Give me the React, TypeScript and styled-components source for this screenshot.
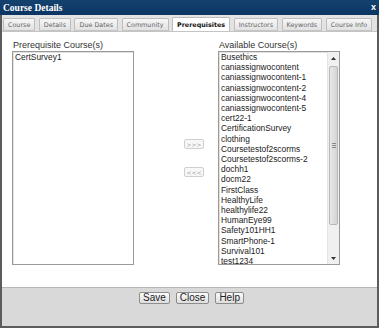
import React from "react";
import styled, { createGlobalStyle } from "styled-components";

const GlobalStyle = createGlobalStyle`
  html, body {
    margin: 0;
    padding: 0;
    width: 379px;
    height: 328px;
    overflow: hidden;
    background: #ffffff;
  }
`;

const tabs = [
  "Course",
  "Details",
  "Due Dates",
  "Community",
  "Prerequisites",
  "Instructors",
  "Keywords",
  "Course Info",
];

const available = [
  "Busethics",
  "caniassignwocontent",
  "caniassignwocontent-1",
  "caniassignwocontent-2",
  "caniassignwocontent-4",
  "caniassignwocontent-5",
  "cert22-1",
  "CertificationSurvey",
  "clothing",
  "Coursetestof2scorms",
  "Coursetestof2scorms-2",
  "dochh1",
  "docm22",
  "FirstClass",
  "HealthyLife",
  "healthylife22",
  "HumanEye99",
  "Safety101HH1",
  "SmartPhone-1",
  "Survival101",
  "test1234",
];

const App = () => {
  return (
    <>
      <GlobalStyle />
      <Window>
        <TitleBar>
          <Title>Course Details</Title>
          <CloseX>x</CloseX>
        </TitleBar>
        <TabStrip>
          {tabs.map((t) => (
            <Tab key={t} active={t === "Prerequisites"}>
              {t}
            </Tab>
          ))}
        </TabStrip>
        <Content>
          <Column>
            <Label>Prerequisite Course(s)</Label>
            <ListBox>
              <Item>CertSurvey1</Item>
            </ListBox>
          </Column>
          <Mover>
            <MoveButton>&gt;&gt;&gt;</MoveButton>
            <MoveButton>&lt;&lt;&lt;</MoveButton>
          </Mover>
          <Column>
            <Label>Available Course(s)</Label>
            <ListBox>
              <Items>
                {available.map((c) => (
                  <Item key={c}>{c}</Item>
                ))}
              </Items>
              <ScrollBar>
                <Arrow>
                  <svg width="5" height="3" viewBox="0 0 5 3">
                    <path d="M0 3 L2.5 0 L5 3 Z" fill="#333" />
                  </svg>
                </Arrow>
                <Track>
                  <Thumb>
                    <Grip />
                    <Grip />
                    <Grip />
                  </Thumb>
                </Track>
                <Arrow>
                  <svg width="5" height="3" viewBox="0 0 5 3">
                    <path d="M0 0 L2.5 3 L5 0 Z" fill="#333" />
                  </svg>
                </Arrow>
              </ScrollBar>
            </ListBox>
          </Column>
        </Content>
        <Footer>
          <FooterButton>Save</FooterButton>
          <FooterButton>Close</FooterButton>
          <FooterButton>Help</FooterButton>
        </Footer>
      </Window>
    </>
  );
};

const Window = styled.div`
  box-sizing: border-box;
  width: 379px;
  height: 328px;
  border: 2px solid #5c5c5c;
  border-top: none;
  display: flex;
  flex-direction: column;
  font-family: "Liberation Sans", Arial, sans-serif;
`;

const TitleBar = styled.div`
  height: 15px;
  flex: none;
  background: linear-gradient(#14426f, #0b3562);
  display: flex;
  align-items: center;
  justify-content: space-between;
  padding: 0 3px 0 3px;
  margin: 0 -2px;
`;

const Title = styled.span`
  color: #ffffff;
  font-family: "Liberation Serif", "Times New Roman", serif;
  font-weight: bold;
  font-size: 9.5px;
`;

const CloseX = styled.span`
  color: #ffffff;
  font-weight: bold;
  font-size: 9px;
  line-height: 9px;
`;

const TabStrip = styled.div`
  height: 16px;
  flex: none;
  background: #e3e3e3;
  display: flex;
  align-items: flex-end;
  gap: 3.5px;
  padding-left: 1px;
  border-bottom: 1px solid #c4c4c4;
  overflow: hidden;
`;

const Tab = styled.div<{ active?: boolean }>`
  box-sizing: border-box;
  flex: none;
  white-space: nowrap;
  height: ${(p) => (p.active ? "15px" : "13px")};
  padding: 0 4px;
  display: flex;
  align-items: center;
  font-family: "DejaVu Sans", Verdana, sans-serif;
  font-size: 6.4px;
  font-weight: ${(p) => (p.active ? "bold" : "normal")};
  color: ${(p) => (p.active ? "#111" : "#666")};
  background: ${(p) =>
    p.active ? "#ffffff" : "linear-gradient(#f6f6f6, #e2e2e2)"};
  border: 1px solid #bdbdbd;
  border-bottom: ${(p) => (p.active ? "none" : "1px solid #c4c4c4")};
  margin-bottom: ${(p) => (p.active ? "-1px" : "0")};
  border-radius: 2px 2px 0 0;
`;

const Content = styled.div`
  flex: 1;
  background: #ffffff;
  display: flex;
  padding: 8px 0 0 10px;
`;

const Column = styled.div`
  display: flex;
  flex-direction: column;
`;

const Label = styled.div`
  font-size: 9px;
  line-height: 11px;
  color: #333;
  padding-left: 1px;
`;

const ListBox = styled.div`
  box-sizing: border-box;
  width: 122px;
  height: 214px;
  border: 1px solid #9a9a9a;
  box-shadow: inset 1px 1px 0 #e0e0e0;
  background: #fff;
  display: flex;
  overflow: hidden;
`;

const Items = styled.div`
  flex: 1;
  overflow: hidden;
`;

const Item = styled.div`
  font-size: 8.4px;
  line-height: 10.2px;
  color: #222;
  padding-left: 2px;
  white-space: nowrap;
`;

const ScrollBar = styled.div`
  width: 11px;
  flex: none;
  display: flex;
  flex-direction: column;
  background: #f0f0f0;
  border-left: 1px solid #e4e4e4;
`;

const Arrow = styled.div`
  height: 12px;
  flex: none;
  display: flex;
  align-items: center;
  justify-content: center;
  background: #f0f0f0;
`;

const Track = styled.div`
  flex: 1;
  padding: 2px 1px 27px;
  display: flex;
`;

const Thumb = styled.div`
  flex: 1;
  box-sizing: border-box;
  border: 1px solid #b8b8b8;
  border-radius: 2px;
  background: linear-gradient(90deg, #e8e8e8, #d4d4d4);
  display: flex;
  flex-direction: column;
  justify-content: center;
  align-items: center;
  gap: 1px;
`;

const Grip = styled.div`
  width: 4px;
  height: 1px;
  background: #8a8a8a;
`;

const Mover = styled.div`
  width: 84px;
  height: 214px;
  margin-top: 11px;
  box-sizing: border-box;
  padding-left: 50px;
  display: flex;
  flex-direction: column;
  justify-content: center;
  gap: 18px;
`;

const MoveButton = styled.div`
  box-sizing: border-box;
  width: 20px;
  height: 10px;
  border: 1px solid #cfcfcf;
  border-radius: 2px;
  background: #f7f7f7;
  color: #9a9a9a;
  font-family: "DejaVu Sans", Verdana, sans-serif;
  font-size: 6px;
  display: flex;
  align-items: center;
  justify-content: center;
`;

const Footer = styled.div`
  height: 39px;
  flex: none;
  box-sizing: border-box;
  background: #d9d9d9;
  border-top: 1px solid #b5b5b5;
  display: flex;
  justify-content: center;
  align-items: flex-start;
  gap: 6px;
  padding: 4px 0 0 4px;
`;

const FooterButton = styled.div`
  box-sizing: border-box;
  height: 12px;
  padding: 0 3px;
  border: 1px solid #8c8c8c;
  border-radius: 2px;
  background: linear-gradient(#fbfbfb, #dedede);
  color: #222;
  font-size: 10px;
  line-height: 10px;
  display: flex;
  align-items: center;
`;

export default App;
